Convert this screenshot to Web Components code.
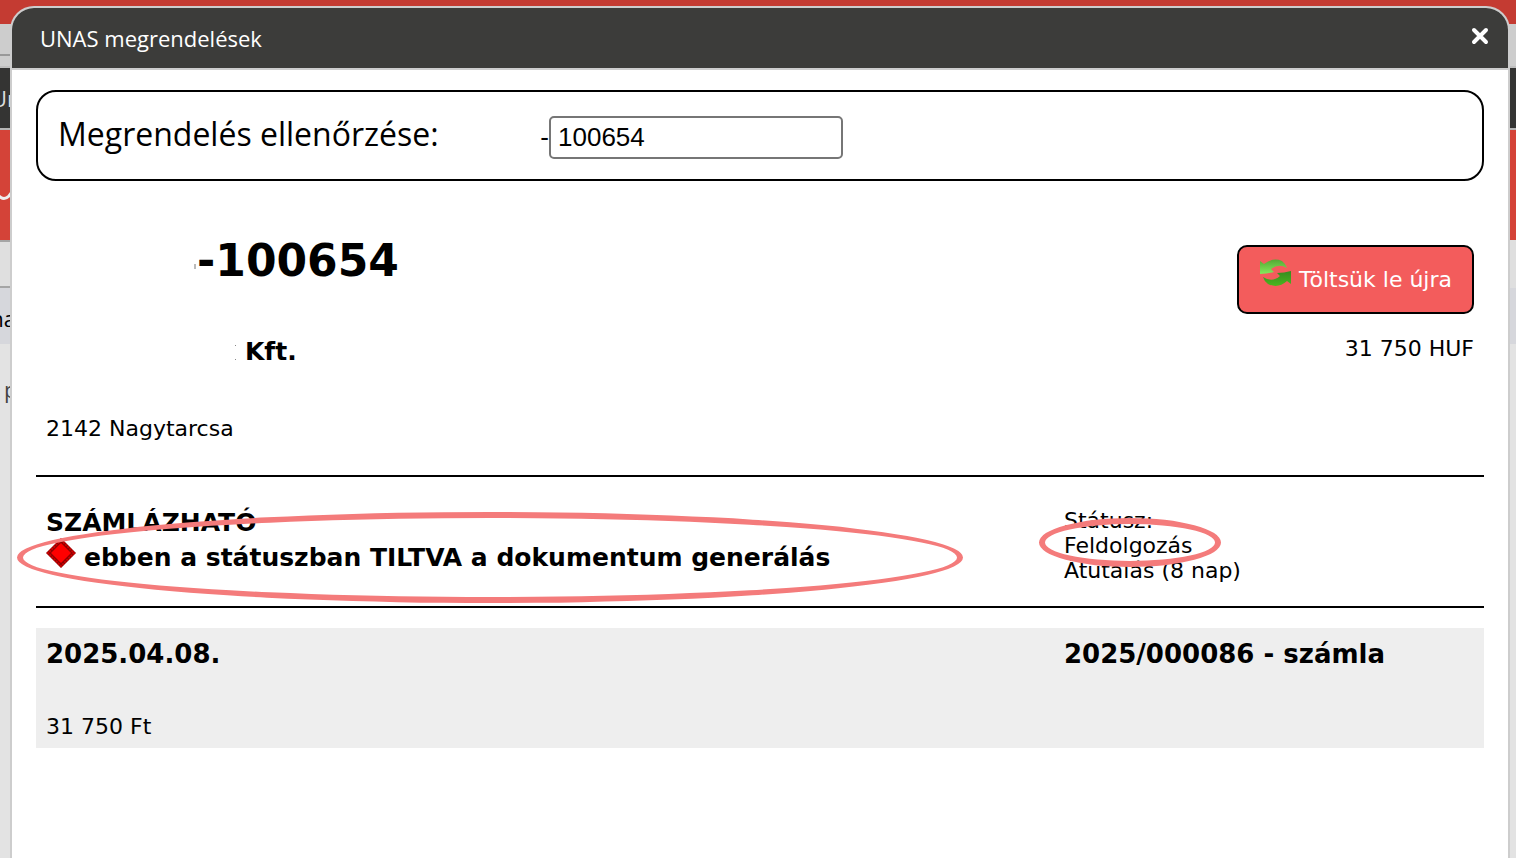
<!DOCTYPE html>
<html lang="hu">
<head>
<meta charset="utf-8">
<meta name="viewport" content="width=device-width, initial-scale=1">
<title>UNAS megrendelések</title>
<style>
  body {
    margin: 0;
    min-height: 100vh;
    overflow: hidden;
    position: relative;
    background: #e3e3e3;
    color: #000;
    font: 22px/25px "DejaVu Sans", sans-serif;
  }
</style>
</head>
<body>
<page-backdrop></page-backdrop>
<modal-dialog heading="UNAS megrendelések">
  <order-search value="100654"></order-search>
  <order-summary number="-100654">
    <span slot="customer">Kft.</span>
    <span slot="total">31 750 HUF</span>
    <span slot="address">2142 Nagytarcsa</span>
  </order-summary>
  <order-status>
    <span slot="billing">SZÁMLÁZHATÓ</span>
    <span slot="warning">ebben a státuszban TILTVA a dokumentum generálás</span>
    <span slot="status">Feldolgozás</span>
    <span slot="payment">Átutalás (8 nap)</span>
  </order-status>
  <invoice-row>
    <span slot="date">2025.04.08.</span>
    <span slot="document">2025/000086 - számla</span>
    <span slot="amount">31 750 Ft</span>
  </invoice-row>
</modal-dialog>

<script>
// The dimmed shop admin page behind the dialog
class PageBackdrop extends HTMLElement {
  constructor() {
    super();
    this.attachShadow({ mode: 'open' }).innerHTML = `
      <style>
        :host { display: block; font: 22px/28px "Open Sans", sans-serif; }
        div { display: flex; align-items: center; box-sizing: border-box; }
        span { display: flex; justify-content: flex-end; width: 16px; white-space: nowrap; }
        .top { height: 24px; background: #c43b32; }
        .tools { height: 44px; background: linear-gradient(#999, #999) 0 30px / 50% 2px no-repeat #cdcdcd; border-bottom: 2px solid #bfbfbf; }
        .menu { height: 62px; background: #343433; color: #ddd; border-bottom: 2px solid #b5b5b5; }
        .banner { height: 110px; background: #d44338; }
        .filter { height: 48px; background: linear-gradient(#a5a5a5, #a5a5a5) 0 0 / 50% 2px no-repeat, linear-gradient(#a5a5a5, #a5a5a5) 0 100% / 50% 2px no-repeat #dfdfdf; }
        .list { height: 56px; padding-top: 4px; background: #d6d7dc; }
        .text { height: 90px; color: #444; }
        .text span { justify-content: flex-start; padding-left: 4px; }
        svg { display: block; margin-top: 6px; }
      </style>
      <div class="top"></div>
      <div class="tools"></div>
      <div class="menu"><span>Ur</span></div>
      <div class="banner"><svg width="12" height="28" fill="none" stroke="#eee" stroke-width="3"><path d="M-1 22Q4 27 9 22L12 18"/></svg></div>
      <div class="filter"></div>
      <div class="list"><span>na</span></div>
      <div class="text"><span>p</span></div>`;
  }
}

class ModalDialog extends HTMLElement {
  constructor() {
    super();
    this.attachShadow({ mode: 'open' });
  }

  connectedCallback() {
    this.shadowRoot.innerHTML = `
      <style>
        :host {
          display: block;
          position: absolute;
          inset: 6px 6px 0 10px;
          box-sizing: border-box;
          border: 2px solid #cdcdcd;
          border-bottom: 0;
          border-radius: 24px 24px 0 0;
          overflow: hidden;
          background: #fff;
        }
        header {
          display: flex;
          justify-content: space-between;
          align-items: center;
          height: 60px;
          padding: 0 18px 0 28px;
          background: #3c3c3a;
          border-bottom: 2px solid #cdcdcd;
          color: #fff;
        }
        h1 { margin: 0; font: 500 22px/30px "Open Sans", sans-serif; }
        button { display: flex; padding: 0 0 4px; border: 0; background: none; }
        main { display: block; padding: 20px 24px; }
      </style>
      <header>
        <h1>${this.getAttribute('heading')}</h1>
        <button type="button" aria-label="Bezárás">
          <svg width="20" height="20" viewBox="0 0 20 20" stroke="#fff" stroke-width="4" stroke-linecap="round"><path d="M4 4L16 16M16 4L4 16"/></svg>
        </button>
      </header>
      <main><slot></slot></main>`;
  }
}

class OrderSearch extends HTMLElement {
  constructor() {
    super();
    this.attachShadow({ mode: 'open' });
  }

  connectedCallback() {
    this.shadowRoot.innerHTML = `
      <style>
        :host {
          display: flex;
          align-items: flex-start;
          height: 91px;
          box-sizing: border-box;
          padding: 24px 20px 0;
          border: 2px solid #000;
          border-radius: 20px;
          font: 32px/36px "Open Sans", sans-serif;
        }
        label { width: 480px; }
        .prefix { width: 11px; text-align: right; font: 26px/43px "Liberation Sans", Arial, sans-serif; }
        input {
          width: 294px;
          height: 43px;
          box-sizing: border-box;
          padding: 0 7px;
          border: 2px solid #767676;
          border-radius: 5px;
          background: #fff;
          color: #000;
          font: 26px/36px "Liberation Sans", Arial, sans-serif;
        }
      </style>
      <label for="order">Megrendelés ellenőrzése:</label>
      <span class="prefix">-</span>
      <input id="order" type="text" value="${this.getAttribute('value')}">`;
  }
}

class OrderSummary extends HTMLElement {
  constructor() {
    super();
    this.attachShadow({ mode: 'open' });
  }

  connectedCallback() {
    this.shadowRoot.innerHTML = `
      <style>
        :host {
          display: flex;
          justify-content: space-between;
          align-items: flex-start;
          padding: 54px 10px 34px;
          border-bottom: 2px solid #000;
        }
        h2 { display: flex; align-items: center; margin: 0 0 50px; padding-left: 148px; font-size: 44px; line-height: 52px; }
        h3 { display: flex; align-items: center; margin: 0 0 49px; padding-left: 189px; font-size: 25px; line-height: 30px; }
        h3 svg { margin-right: 8px; }
        p { margin: 0; }
        .side { display: flex; flex-direction: column; align-items: flex-end; gap: 22px; padding-top: 10px; }
        button {
          display: flex;
          align-items: center;
          gap: 7px;
          height: 69px;
          padding: 0 20px;
          border: 2px solid #000;
          border-radius: 10px;
          background: #f35c5c;
          color: #fff;
          font: inherit;
        }
        button svg { margin-bottom: 14px; }
      </style>
      <div>
        <h2><svg width="3" height="16"><path d="M1 11v5" fill="none" stroke="#777"/></svg>${this.getAttribute('number')}</h2>
        <h3><svg width="2" height="16" fill="#888"><path d="M0 1h1v1H0zM0 15h1v1H0z"/></svg><slot name="customer"></slot></h3>
        <p><slot name="address"></slot></p>
      </div>
      <div class="side">
        <button type="button">
          <svg width="33" height="28" viewBox="0 0 33 28">
            <defs>
              <linearGradient id="light" x2="0" y2="1"><stop stop-color="#55a834"/><stop offset="1" stop-color="#83ea5c"/></linearGradient>
              <linearGradient id="dark" x2="0" y2="1"><stop stop-color="#368b20"/><stop offset="1" stop-color="#49b51e"/></linearGradient>
            </defs>
            <path d="M1 2L5 5Q14-2 23 2Q27 5 28 9Q20 4 12 10L15 13Q8 15 1 15Z" fill="url(#light)"/>
            <path d="M32 12V25L28 22Q19 30 9 25Q5 22 4 18Q13 24 21 17L18 14Q25 14 32 12Z" fill="url(#dark)"/>
          </svg>
          Töltsük le újra
        </button>
        <p><slot name="total"></slot></p>
      </div>`;
  }
}

// Hand-drawn style ellipse that marks a piece of text
class MarkEllipse extends HTMLElement {
  constructor() {
    super();
    this.attachShadow({ mode: 'open' }).innerHTML = `
      <style>
        :host { display: block; position: absolute; box-sizing: border-box; border: 6px solid #f47b7b; border-radius: 50%; pointer-events: none; }
      </style>`;
  }
}

class OrderStatus extends HTMLElement {
  constructor() {
    super();
    this.attachShadow({ mode: 'open' }).innerHTML = `
      <style>
        :host {
          display: grid;
          grid-template-columns: 1fr 410px;
          align-items: start;
          position: relative;
          padding: 28px 10px 23px;
          border-bottom: 2px solid #000;
        }
        p { margin: 0; }
        .left { font-weight: bold; font-size: 25px; line-height: 35px; }
        .warning { display: flex; align-items: center; gap: 8px; height: 35px; white-space: nowrap; }
        .warning svg { margin-bottom: 10px; }
        .right { padding-top: 3px; }
        .mark-warning { left: -19px; top: 35px; width: 946px; height: 91px; }
        .mark-status { right: 263px; top: 41px; width: 182px; height: 49px; }
      </style>
      <div class="left">
        <p><slot name="billing"></slot></p>
        <p class="warning">
          <svg width="30" height="30" viewBox="0 0 30 30"><path d="M15 0L30 15L15 30L0 15Z" fill="#8c0000"/><path d="M15 2L28 15L15 28L2 15Z" fill="none" stroke="#d00000" stroke-width="2" stroke-dasharray="2 1"/><path d="M15 5L25 15L15 25L5 15Z" fill="#f00"/></svg>
          <slot name="warning"></slot>
        </p>
      </div>
      <div class="right">
        <p>Státusz:</p>
        <p><slot name="status"></slot></p>
        <p><slot name="payment"></slot></p>
      </div>
      <mark-ellipse class="mark-warning"></mark-ellipse>
      <mark-ellipse class="mark-status"></mark-ellipse>`;
  }
}

class InvoiceRow extends HTMLElement {
  constructor() {
    super();
    this.attachShadow({ mode: 'open' }).innerHTML = `
      <style>
        :host {
          display: grid;
          grid-template-columns: 1fr 410px;
          row-gap: 44px;
          margin-top: 20px;
          padding: 10px 10px 9px;
          background: #eee;
        }
        strong { font-size: 26px; line-height: 32px; }
      </style>
      <strong><slot name="date"></slot></strong>
      <strong><slot name="document"></slot></strong>
      <slot name="amount"></slot>`;
  }
}

customElements.define('page-backdrop', PageBackdrop);
customElements.define('modal-dialog', ModalDialog);
customElements.define('order-search', OrderSearch);
customElements.define('order-summary', OrderSummary);
customElements.define('mark-ellipse', MarkEllipse);
customElements.define('order-status', OrderStatus);
customElements.define('invoice-row', InvoiceRow);
</script>
</body>
</html>
